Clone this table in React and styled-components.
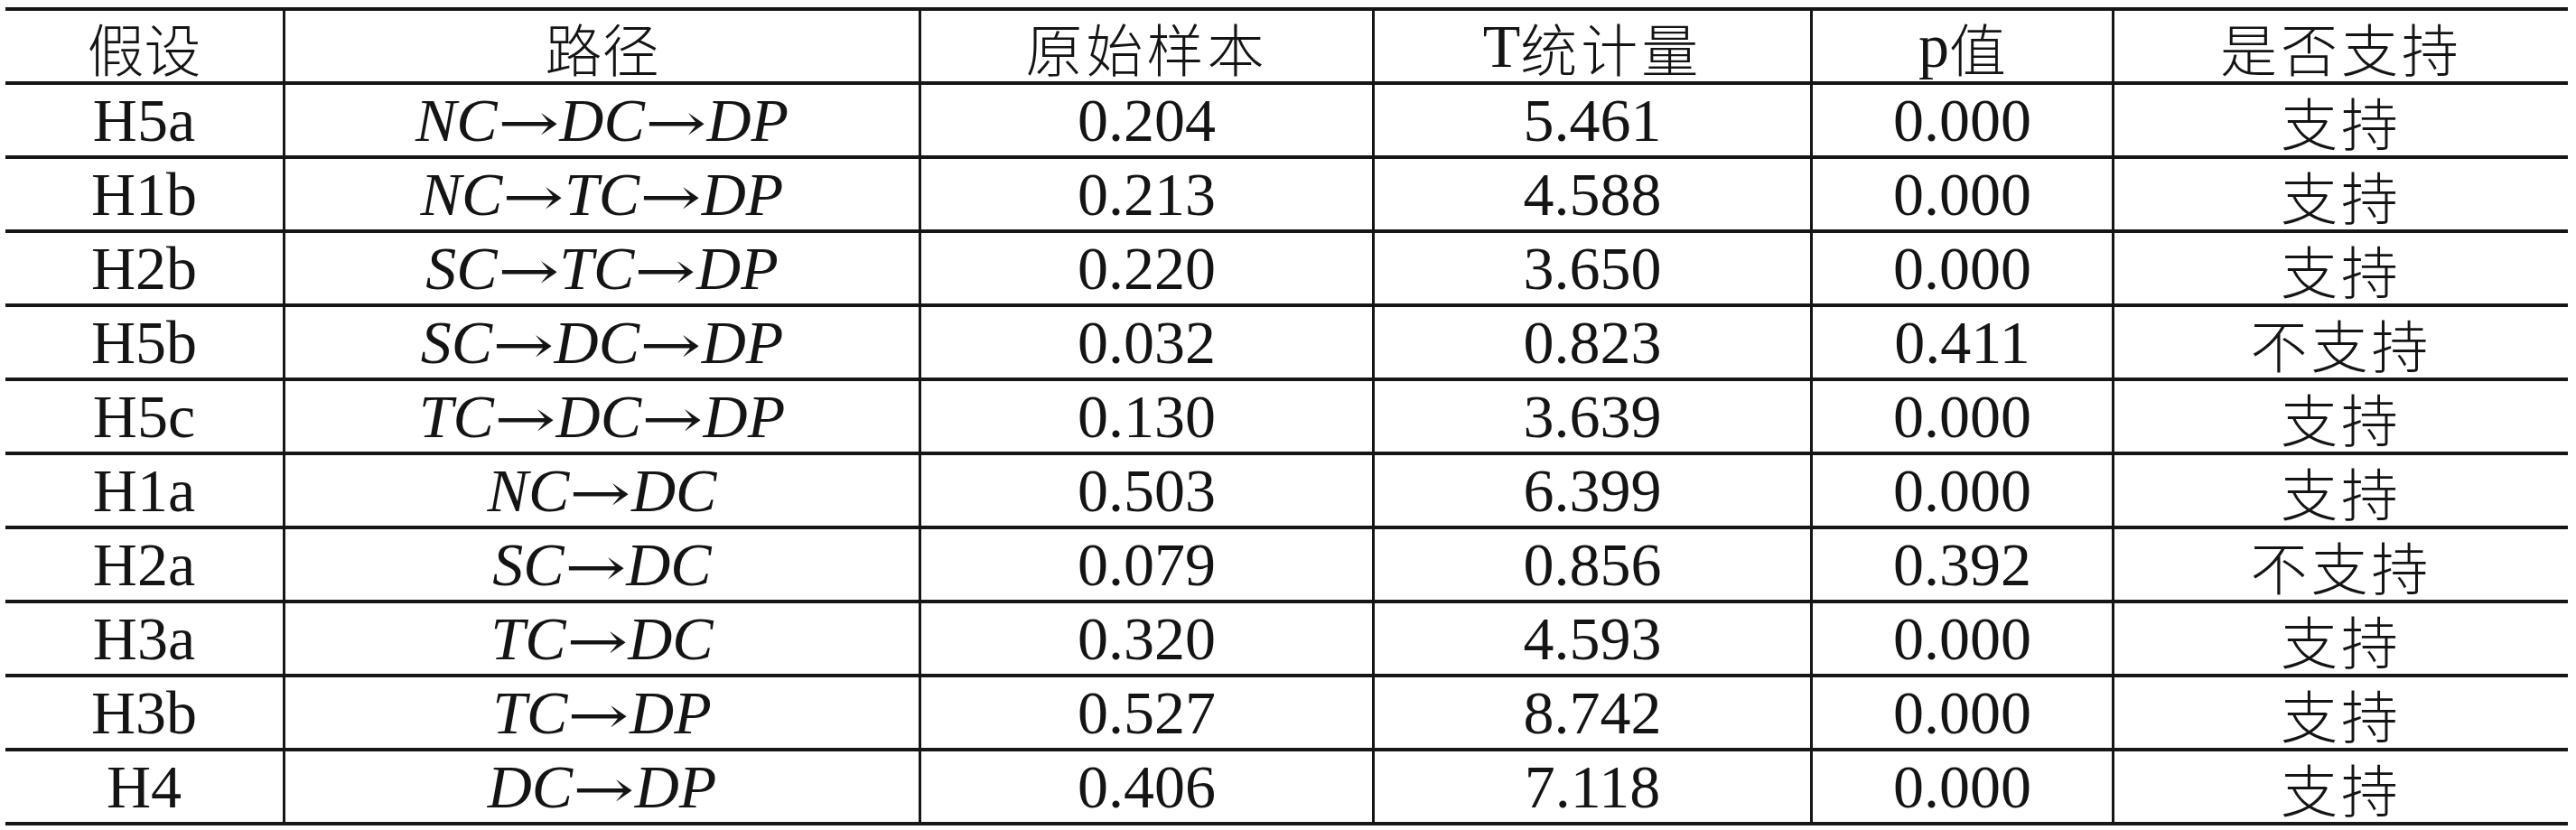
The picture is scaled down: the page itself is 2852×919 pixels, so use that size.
import React from 'react';
import styled, { createGlobalStyle } from 'styled-components';

const GlobalStyle = createGlobalStyle`
  html, body {
    margin: 0;
    padding: 0;
    background: #fff;
  }
  body {
    font-family: "Liberation Serif", "Noto Sans CJK SC", serif;
    color: #141414;
  }
`;

const Table = styled.div`
  width: 2837px;
  margin: 8px 0 0 6px;
  border-bottom: 4px solid #161616;
`;

const Row = styled.div`
  display: grid;
  grid-template-columns: 307px 704px 502px 485px 334px 1fr;
  height: 82px;
  box-sizing: border-box;
  border-top: 4px solid #161616;
`;

const Cell = styled.div`
  display: flex;
  align-items: center;
  justify-content: center;
  box-sizing: border-box;
  border-left: ${({ first }) => (first ? 'none' : '3px solid #161616')};
  font-size: 68px;
  line-height: 1;
  white-space: nowrap;
`;

const Cjk = styled.span`
  font-family: "Noto Sans CJK SC", sans-serif;
  font-size: 63px;
  font-weight: 300;
  letter-spacing: ${({ spaced }) => (spaced ? '4px' : '0')};
`;

const Var = styled.i`
  font-family: "Liberation Serif", serif;
  font-style: italic;
`;

const Arrow = styled.span`
  display: inline-block;
  font-family: "DejaVu Serif", serif;
  font-size: 58px;
  transform: scaleX(1.4);
  margin: 0 10px;
`;

const headers = [
  <Cjk>假设</Cjk>,
  <Cjk>路径</Cjk>,
  <Cjk spaced>原始样本</Cjk>,
  <>T<Cjk spaced>统计量</Cjk></>,
  <>p<Cjk>值</Cjk></>,
  <Cjk spaced>是否支持</Cjk>,
];

const rows = [
  ['H5a', ['NC', 'DC', 'DP'], '0.204', '5.461', '0.000', true],
  ['H1b', ['NC', 'TC', 'DP'], '0.213', '4.588', '0.000', true],
  ['H2b', ['SC', 'TC', 'DP'], '0.220', '3.650', '0.000', true],
  ['H5b', ['SC', 'DC', 'DP'], '0.032', '0.823', '0.411', false],
  ['H5c', ['TC', 'DC', 'DP'], '0.130', '3.639', '0.000', true],
  ['H1a', ['NC', 'DC'], '0.503', '6.399', '0.000', true],
  ['H2a', ['SC', 'DC'], '0.079', '0.856', '0.392', false],
  ['H3a', ['TC', 'DC'], '0.320', '4.593', '0.000', true],
  ['H3b', ['TC', 'DP'], '0.527', '8.742', '0.000', true],
  ['H4', ['DC', 'DP'], '0.406', '7.118', '0.000', true],
];

function Path({ nodes }) {
  return (
    <span>
      {nodes.map((n, i) => (
        <React.Fragment key={i}>
          {i > 0 && <Arrow>→</Arrow>}
          <Var>{n}</Var>
        </React.Fragment>
      ))}
    </span>
  );
}

export default function App() {
  return (
    <>
      <GlobalStyle />
      <Table>
        <Row>
          {headers.map((h, i) => (
            <Cell key={i} first={i === 0}>{h}</Cell>
          ))}
        </Row>
        {rows.map(([id, path, beta, t, p, ok]) => (
          <Row key={id}>
            <Cell first>{id}</Cell>
            <Cell><Path nodes={path} /></Cell>
            <Cell>{beta}</Cell>
            <Cell>{t}</Cell>
            <Cell>{p}</Cell>
            <Cell><Cjk spaced>{ok ? '支持' : '不支持'}</Cjk></Cell>
          </Row>
        ))}
      </Table>
    </>
  );
}
